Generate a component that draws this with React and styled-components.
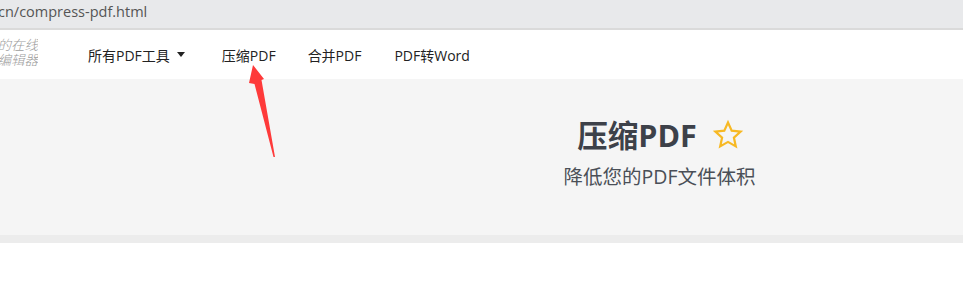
import styled, { createGlobalStyle } from "styled-components";

const GlobalStyle = createGlobalStyle`
  html, body {
    margin: 0;
    padding: 0;
    background: #ffffff;
    font-family: "Open Sans", "Noto Sans CJK SC", sans-serif;
  }
`;

const App = () => {
  return (
    <Page>
      <GlobalStyle />
      <UrlBar>cn/compress-pdf.html</UrlBar>
      <Header>
        <Logo>
          <span>的在线</span>
          <span>编辑器</span>
        </Logo>
        <Nav>
          <NavItem $pad="0 37px 0 0">
            所有PDF工具 <Caret />
          </NavItem>
          <NavItem $pad="0 32px 0 0">压缩PDF</NavItem>
          <NavItem $pad="0 33px 0 0">合并PDF</NavItem>
          <NavItem>PDF转Word</NavItem>
        </Nav>
      </Header>
      <Hero>
        <TitleRow>
          <Title>压缩PDF</Title>
          <Star viewBox="0 0 32 32">
            <path
              d="M16 3.5l3.7 8.2 8.9.9-6.7 6 1.9 8.8L16 22.9l-7.8 4.5 1.9-8.8-6.7-6 8.9-.9z"
              fill="none"
              stroke="#f7b924"
              strokeWidth="2.2"
            />
          </Star>
        </TitleRow>
        <Subtitle>降低您的PDF文件体积</Subtitle>
      </Hero>
      <Stripe />
      <Arrow viewBox="0 0 30 93">
        <path d="M5 0 L16 14 L13.5 15 L27 92 L25.5 92 L6.5 19 L1 18 Z" fill="#fe3a3a" />
      </Arrow>
    </Page>
  );
};

// styled components
const Page = styled.div`
  position: relative;
  width: 963px;
  height: 291px;
  overflow: hidden;
  background: #fff;
`;

const UrlBar = styled.div`
  box-sizing: border-box;
  height: 30px;
  margin-left: -2px;
  padding-bottom: 4px;
  background: #e8e9eb;
  border-bottom: 2px solid #dadada;
  color: #555;
  font-family: "Open Sans", sans-serif;
  font-size: 14.5px;
  line-height: 24px;
`;

const Header = styled.div`
  display: flex;
  align-items: center;
  height: 49px;
  background: #fff;
`;

const Logo = styled.div`
  display: flex;
  flex-direction: column;
  align-items: flex-end;
  width: 38px;
  overflow: hidden;
  margin-top: -6px;
  color: #9c9c9c;
  font-family: "Noto Sans CJK SC", sans-serif;
  font-style: italic;
  font-weight: 300;
  font-size: 13.5px;
  line-height: 15px;
  white-space: nowrap;
`;

const Nav = styled.div`
  display: flex;
  align-items: center;
  margin-left: 50px;
`;

const NavItem = styled.div`
  display: flex;
  align-items: center;
  gap: 3px;
  padding: ${(p) => p.$pad || "0"};
  font-size: 14px;
  color: #222;
  white-space: nowrap;
`;

const Caret = styled.span`
  display: inline-block;
  width: 0;
  height: 0;
  margin-left: 4px;
  border-left: 4px solid transparent;
  border-right: 4px solid transparent;
  border-top: 5px solid #222;
`;

const Hero = styled.div`
  display: flex;
  flex-direction: column;
  align-items: center;
  height: 156px;
  box-sizing: border-box;
  padding: 34px 0 0 356px;
  background: #f5f5f5;
`;

const TitleRow = styled.div`
  display: flex;
  align-items: center;
  gap: 15px;
  margin-left: 2px;
`;

const Title = styled.h1`
  margin: 0;
  font-size: 30.5px;
  line-height: 44px;
  font-weight: 700;
  color: #3d4149;
`;

const Star = styled.svg`
  width: 32px;
  height: 32px;
`;

const Subtitle = styled.div`
  margin-top: 8px;
  font-size: 19.5px;
  line-height: 24px;
  color: #4a4f57;
`;

const Stripe = styled.div`
  height: 8px;
  background: #ececec;
`;

const Arrow = styled.svg`
  position: absolute;
  left: 248px;
  top: 65px;
  width: 30px;
  height: 93px;
  overflow: visible;
`;

export default App;
